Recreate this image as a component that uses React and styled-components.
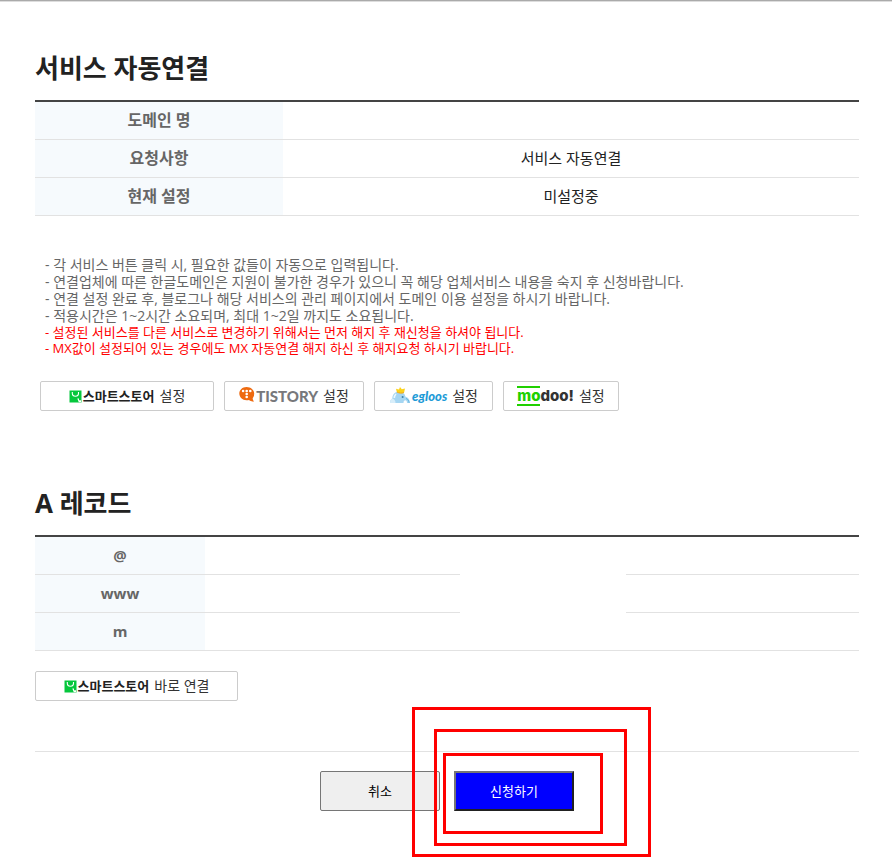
import React from "react";
import styled, { createGlobalStyle } from "styled-components";

const GlobalStyle = createGlobalStyle`
  * {
    box-sizing: border-box;
  }
  body {
    margin: 0;
    background-color: #fff;
    color: #222;
    font-family: "Open Sans", "Noto Sans CJK KR", sans-serif;
  }
  button {
    font-family: inherit;
    cursor: pointer;
  }
`;

const Page = styled.main`
  padding: 47px 33px 56px 35px;
  border-top: 1px solid #aaa;
  box-shadow: inset 0 1px 0 #ddd;
`;

const Title = styled.h2`
  margin: 0;
  padding-bottom: 12px;
  font-size: 26px;
  line-height: 40px;
  font-weight: 700;
`;

const Table = styled.table`
  width: 100%;
  table-layout: fixed;
  border-collapse: separate;
  border-spacing: 0;
  border-top: 2px solid #444;
  font-size: 15px;
  line-height: 20px;
  text-align: center;
  th {
    width: ${({ $head }) => $head};
    background-color: #f6fafd;
    color: #666;
    font-size: ${({ $headSize }) => $headSize};
    font-weight: 700;
  }
  th,
  td {
    height: 38px;
    padding: 0 0 2px;
    border-bottom: 1px solid #e2e2e2;
  }
`;

const Cell = styled.td`
  width: ${({ $width }) => $width || "auto"};
`;

const NoticeList = styled.ul`
  margin: 0;
  padding: 40px 10px 25px;
  list-style: none;
`;

const Notice = styled.li`
  font-size: ${({ $warn }) => ($warn ? "13px" : "14px")};
  line-height: ${({ $warn }) => ($warn ? "16px" : "17px")};
  color: ${({ $warn }) => ($warn ? "#f00" : "#666")};
`;

const ServiceRow = styled.div`
  display: flex;
  flex-wrap: wrap;
  gap: 10px;
  padding: 0 5px 72px;
`;

const ServiceButton = styled.button`
  display: flex;
  justify-content: center;
  align-items: center;
  gap: 5px;
  width: ${({ $width }) => $width};
  height: 30px;
  padding: 0;
  border: 1px solid #ccc;
  border-radius: 2px;
  background-color: #fff;
  color: #333;
  font-size: 14px;
  line-height: 20px;
  white-space: nowrap;
`;

const Brand = styled.span`
  display: flex;
  align-items: center;
  gap: 1px;
`;

const StoreName = styled.b`
  font-size: 13px;
  color: #222;
`;

const TistoryName = styled.b`
  font-family: Lato, sans-serif;
  font-size: 15px;
  font-weight: 900;
  line-height: 20px;
  color: #77787b;
`;

const EgloosName = styled.b`
  font-family: Lato, sans-serif;
  font-size: 13px;
  font-style: italic;
  font-weight: 900;
  line-height: 20px;
  color: #1e9bd7;
`;

const ModooName = styled.b`
  display: flex;
  font-family: Inter, sans-serif;
  font-size: 15px;
  font-weight: 800;
  line-height: 16px;
  color: #333;
  span {
    border: solid #20d000;
    border-width: 2px 0;
    color: #20d000;
  }
  em {
    padding: 2px 0;
    font-style: normal;
  }
`;

const DirectRow = styled.div`
  padding: 20px 0 50px;
`;

const Actions = styled.div`
  display: flex;
  justify-content: center;
  gap: 14px;
  padding-top: 19px;
  border-top: 1px solid #e2e2e2;
`;

const ActionButton = styled.button`
  width: 120px;
  height: 40px;
  padding: 0 0 2px;
  font-size: 13px;
`;

const CancelButton = styled(ActionButton)`
  border: 1px solid #767676;
  border-radius: 2px;
  background-color: #efefef;
  color: #000;
`;

const SubmitButton = styled(ActionButton)`
  border: 2px solid;
  border-color: #767676 #212121 #212121 #767676;
  background-color: #00f;
  color: #fff;
`;

const SubmitArea = styled.div`
  position: relative;
`;

const Mark = styled.span`
  position: absolute;
  top: ${({ $top }) => $top}px;
  left: ${({ $left }) => $left}px;
  width: ${({ $width }) => $width}px;
  height: ${({ $height }) => $height}px;
  border: 3px solid #f00;
  pointer-events: none;
`;

const StoreIcon = () => (
  <svg width="13" height="13" viewBox="0 0 13 13" aria-hidden="true">
    <path d="M0.5 0.5h12v12h-12z" fill="#05c73c" />
    <path d="M3.3 2v1.2c0 1.700 1.300 3 3.100 3s3.100-1.300 3.100-3V2" fill="none" stroke="#fff" strokeWidth="1.100" />
    <path d="M8.300 8.500h1.700v1.800H12v1.900H9.800z" fill="#fff" />
  </svg>
);

const TistoryIcon = () => (
  <svg width="16" height="20" viewBox="0 0 16 20" aria-hidden="true">
    <path d="M7.500 1C3.400 1 .3 3.900.3 7.600s3.100 6.700 7.200 6.700c1 0 1.800-.1 2.600-.4 1 1 2.800 1.600 5 1.500-.9-.8-1.500-2-1.400-3.100a6.600 6.600 0 0 0 1.500-4.700C15.200 3.900 11.900 1 7.500 1z" fill="#ee6a10" />
    <g fill="#fff">
      <circle cx="4.100" cy="5" r="1.300" />
      <circle cx="7.700" cy="5" r="1.300" />
      <circle cx="11.300" cy="5" r="1.300" />
      <circle cx="7.700" cy="8" r="1.300" />
      <circle cx="7.700" cy="11" r="1.300" />
    </g>
  </svg>
);

const EgloosIcon = () => (
  <svg width="22" height="20" viewBox="0 0 22 20" aria-hidden="true">
    <path d="M1 17c0-2.200.8-3.800 2.300-4.600C3.400 8.400 6 5.500 10 5.500c3.600 0 5.900 2 6.500 5.300 2.700.6 4.200 2.700 4.500 6.200h-3c0-1.700-.6-2.700-1.700-2.700S14.500 15.300 14.500 17z" fill="#a5d6f2" />
    <path d="M1 17c0-2.200.8-3.800 2.300-4.600 2 .3 3.200 2 3.200 4.600z" fill="#d8eefa" />
    <path d="M7 8c-1.200 1.100-1.700 2.400-1.700 4" fill="none" stroke="#ecf8fe" strokeWidth="1.600" />
    <path d="M7 2.800l3 .8L11 1l1.800 2.300 3.200-.8-.9 4c-2.400 1.300-5.100 1-7.300-.4z" fill="#fcd21a" />
    <path d="M8 6c2 1.300 4.800 1.400 7 .5" fill="none" stroke="#f2a71f" />
    <circle cx="13.600" cy="11" r="1" fill="#3e80a9" />
    <path d="M17 12.500c1.900.6 2.800 2 3.100 4.300" fill="none" stroke="#61b4df" />
  </svg>
);

const SmartStore = () => (
  <Brand>
    <StoreIcon />
    <StoreName>스마트스토어</StoreName>
  </Brand>
);

const requestInfo = [
  { label: "도메인 명", value: "" },
  { label: "요청사항", value: "서비스 자동연결" },
  { label: "현재 설정", value: "미설정중" },
];

const notices = [
  { text: "- 각 서비스 버튼 클릭 시, 필요한 값들이 자동으로 입력됩니다." },
  { text: "- 연결업체에 따른 한글도메인은 지원이 불가한 경우가 있으니 꼭 해당 업체서비스 내용을 숙지 후 신청바랍니다." },
  { text: "- 연결 설정 완료 후, 블로그나 해당 서비스의 관리 페이지에서 도메인 이용 설정을 하시기 바랍니다." },
  { text: "- 적용시간은 1~2시간 소요되며, 최대 1~2일 까지도 소요됩니다." },
  { text: "- 설정된 서비스를 다른 서비스로 변경하기 위해서는 먼저 해지 후 재신청을 하셔야 됩니다.", warn: true },
  { text: "- MX값이 설정되어 있는 경우에도 MX 자동연결 해지 하신 후 해지요청 하시기 바랍니다.", warn: true },
];

const hosts = ["@", "www", "m"];

const App = () => {
  return (
    <Page>
      <GlobalStyle />
      <Title>서비스 자동연결</Title>
      <Table $head="248px" $headSize="16px">
        <tbody>
          {requestInfo.map((info) => (
            <tr key={info.label}>
              <th scope="row">{info.label}</th>
              <Cell>{info.value}</Cell>
            </tr>
          ))}
        </tbody>
      </Table>

      <NoticeList>
        {notices.map((notice) => (
          <Notice key={notice.text} $warn={notice.warn}>
            {notice.text}
          </Notice>
        ))}
      </NoticeList>

      <ServiceRow>
        <ServiceButton type="button" $width="174px">
          <SmartStore />
          설정
        </ServiceButton>
        <ServiceButton type="button" $width="140px">
          <Brand>
            <TistoryIcon />
            <TistoryName>TISTORY</TistoryName>
          </Brand>
          설정
        </ServiceButton>
        <ServiceButton type="button" $width="119px">
          <Brand>
            <EgloosIcon />
            <EgloosName>egloos</EgloosName>
          </Brand>
          설정
        </ServiceButton>
        <ServiceButton type="button" $width="116px">
          <ModooName>
            <span>mo</span>
            <em>doo!</em>
          </ModooName>
          설정
        </ServiceButton>
      </ServiceRow>

      <Title>A 레코드</Title>
      <Table $head="170px" $headSize="15px">
        <tbody>
          {hosts.map((host, index) => (
            <tr key={host}>
              <th scope="row">{host}</th>
              <Cell $width="31%" />
              {index === 0 && <Cell $width="166px" rowSpan={hosts.length} />}
              <Cell />
            </tr>
          ))}
        </tbody>
      </Table>

      <DirectRow>
        <ServiceButton type="button" $width="203px">
          <SmartStore />
          바로 연결
        </ServiceButton>
      </DirectRow>

      <Actions>
        <CancelButton type="button">취소</CancelButton>
        <SubmitArea>
          <SubmitButton type="submit">신청하기</SubmitButton>
          <Mark $top={-64} $left={-42} $width={239} $height={150} />
          <Mark $top={-42} $left={-20} $width={193} $height={117} />
          <Mark $top={-18} $left={-11} $width={160} $height={81} />
        </SubmitArea>
      </Actions>
    </Page>
  );
};

export default App;
